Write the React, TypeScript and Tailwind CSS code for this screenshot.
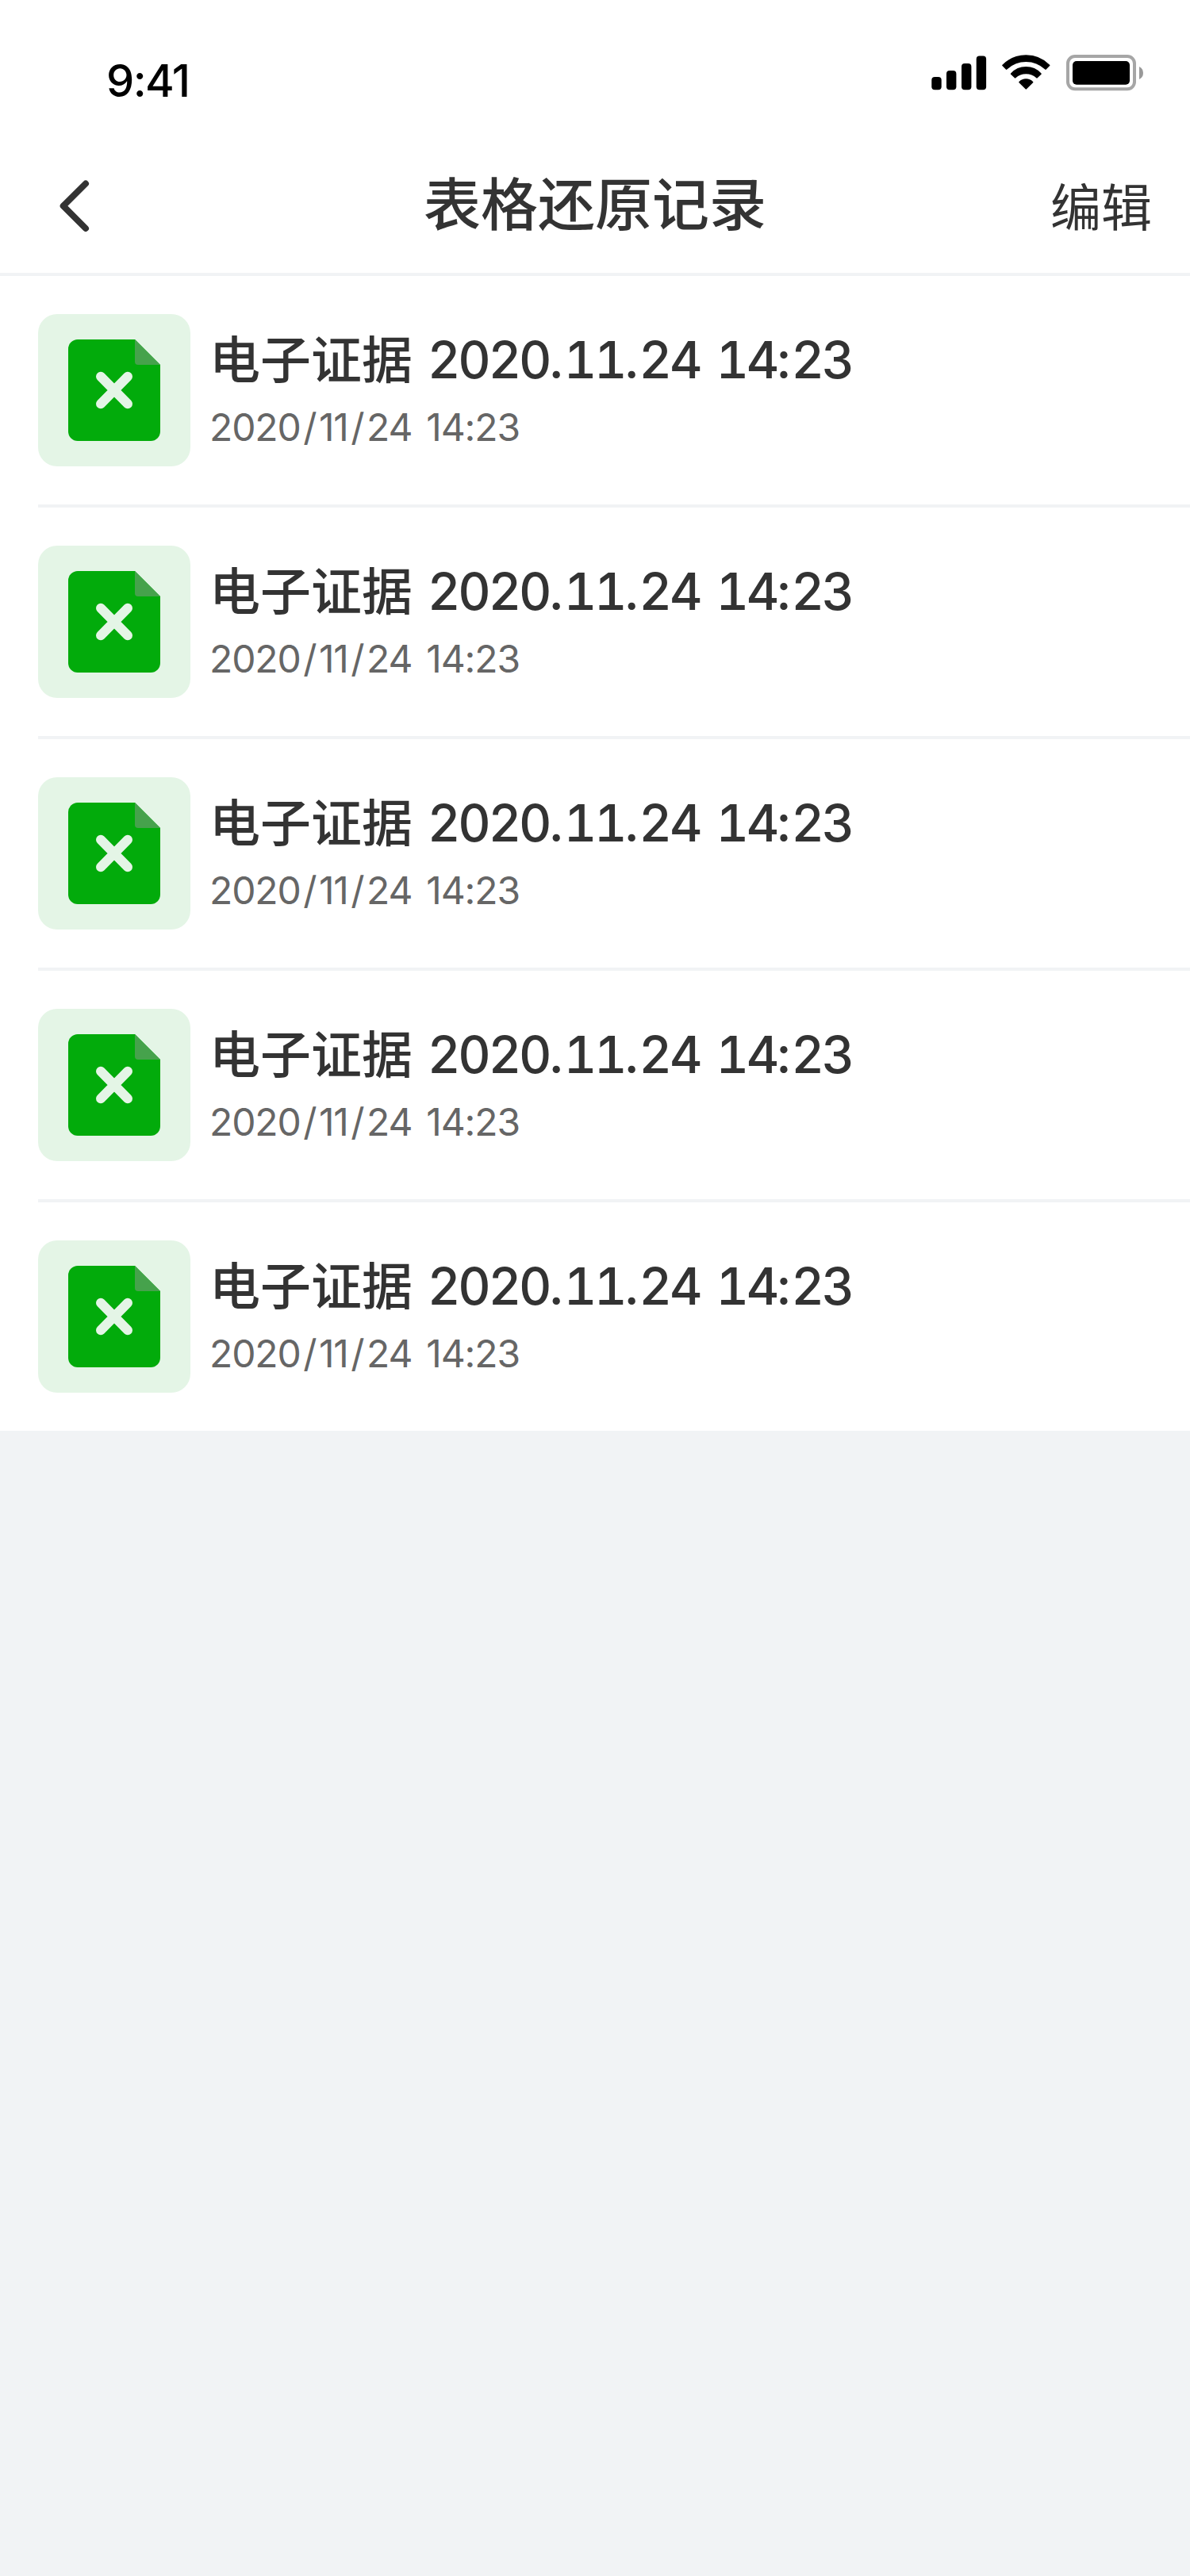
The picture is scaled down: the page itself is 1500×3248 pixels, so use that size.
const records = [1, 2, 3, 4, 5].map((id) => ({
  id,
  name: '电子证据',
  stamp: '2020.11.24 14:23',
  createdAt: '2020/11/24 14:23',
}))

function StatusBar() {
  return (
    <div className="h-44 pt-[66px] pl-[134px] pr-[58px] flex items-start justify-between">
      <span className="text-[56px] leading-[72px] font-medium tracking-[-1.6px] text-black [font-feature-settings:'calt'_0]">
        9:41
      </span>
      <svg className="w-[270px] h-[50px]" viewBox="0 0 270 50">
        {/* signal */}
        <rect x="2.3" y="31" width="12.4" height="16.3" rx="4" />
        <rect x="21" y="23" width="12.4" height="24.3" rx="4" />
        <rect x="40" y="14" width="12.4" height="33.3" rx="4" />
        <rect x="58.7" y="4.5" width="12.4" height="42.8" rx="4" />
        {/* wifi */}
        <g stroke="#000" strokeWidth="2" strokeLinejoin="round">
          <path d="M92.2 16.4A41 41 0 0 1 150.4 16.4L146 20.9A35.7 35.7 0 0 0 96.6 20.9Z" />
          <path d="M102.8 27.1A25.2 25.2 0 0 1 139.8 27.1L135 31.6A20.3 20.3 0 0 0 107.6 31.6Z" />
          <path d="M113.2 37.6A11.6 11.6 0 0 1 129.4 37.6L121.3 45.6Z" />
        </g>
        {/* battery */}
        <rect x="174" y="5" width="84" height="41.3" rx="9" fill="none" stroke="#a6a6a6" strokeWidth="4" />
        <rect x="180" y="11" width="72" height="29.7" rx="5" />
        <path d="M264 18A8.9 8.9 0 0 1 264 34Z" fill="#999" />
      </svg>
    </div>
  )
}

function Header() {
  return (
    <header className="h-[172px] grid grid-cols-[1fr_auto_1fr] items-center border-b-4 border-[#f1f3f5] px-12">
      <button aria-label="返回" className="ml-[27px] justify-self-start">
        <svg className="w-10 h-[66px]" viewBox="0 0 40 66" fill="none" stroke="#333" strokeWidth="8" strokeLinecap="round" strokeLinejoin="round">
          <path d="M33 4.5L4.7 32.7L33 61" />
        </svg>
      </button>
      <h1 className="pb-1 text-[72px] leading-[100px] font-medium">表格还原记录</h1>
      <button className="justify-self-end pt-1 text-[64px] leading-[88px]">编辑</button>
    </header>
  )
}

function SheetIcon() {
  return (
    <div className="size-48 shrink-0 rounded-3xl bg-[#e4f5e6]">
      <svg className="size-48" viewBox="0 0 192 192">
        <path d="M50 32H122L154 64V148A12 12 0 0 1 142 160H50A12 12 0 0 1 38 148V44A12 12 0 0 1 50 32Z" fill="#02ab0b" />
        <path d="M122 32L154 64H126A4 4 0 0 1 122 60Z" fill="#46a24c" />
        <path d="M79 78.7L113 113.3M113 78.7L79 113.3" stroke="#e4f5e6" strokeWidth="12" strokeLinecap="round" />
      </svg>
    </div>
  )
}

// separators carry their own spacing, digits are set tighter
function split(text: string, pattern: RegExp, className: string) {
  return text.split(pattern).map((part, i) =>
    i % 2 ? <span key={i} className={className}>{part}</span> : part
  )
}

export default function App() {
  return (
    <div className="min-h-[3248px] bg-[#f1f3f5] text-[#333] font-['Inter','Noto_Sans_CJK_SC',sans-serif]">
      <div className="bg-white">
        <StatusBar />
        <Header />
        <ul className="pl-12">
          {records.map((r) => (
            <li key={r.id} className="flex gap-6 py-12 border-b-4 border-[#f1f3f5] last:border-b-0">
              <SheetIcon />
              <div className="pt-[14px] whitespace-nowrap">
                <p className="text-[64px] leading-[88px] font-medium">
                  <span className="mr-[19px]">{r.name}</span>
                  <span className="tracking-[-3.1px] [word-spacing:6px] [font-feature-settings:'calt'_0,'tnum'_1]">
                    {split(r.stamp, /([.:])/, 'tracking-[1px]')}
                  </span>
                </p>
                <p className="mt-[9px] text-[48px] leading-[64px] text-[#666] tracking-[-1.1px] [word-spacing:5.5px] [font-feature-settings:'calt'_0]">
                  {split(r.createdAt, /(\/)/, 'px-[3.5px]')}
                </p>
              </div>
            </li>
          ))}
        </ul>
      </div>
    </div>
  )
}
